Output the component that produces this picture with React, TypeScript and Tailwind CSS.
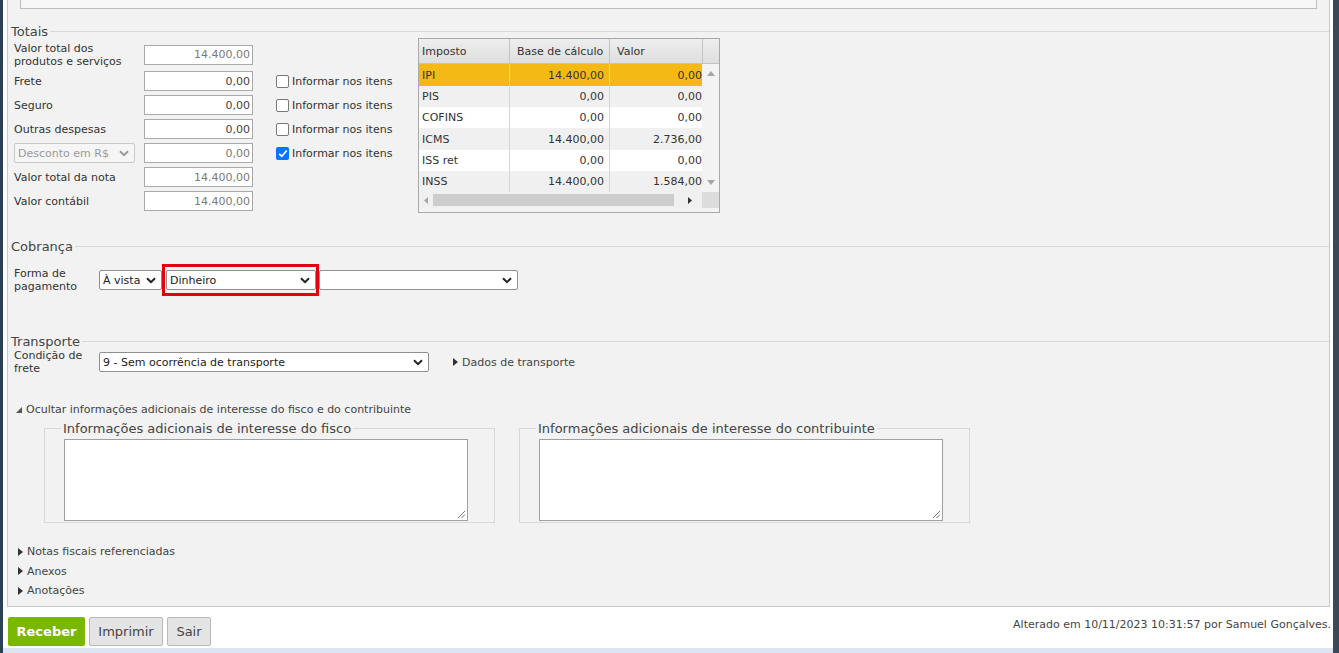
import type { ReactNode } from 'react';

const font = { fontFamily: '"DejaVu Sans", Verdana, sans-serif' };

function Chevron({ color = '#222' }: { color?: string }) {
  return (
    <svg width="10" height="7" viewBox="0 0 10 7" className="shrink-0">
      <path d="M1 1.2 L5 5.2 L9 1.2" fill="none" stroke={color} strokeWidth="2" />
    </svg>
  );
}

function Select({ value, className = '', disabled = false }: { value: string; className?: string; disabled?: boolean }) {
  return (
    <div
      className={`flex h-[20px] items-center justify-between rounded-[2px] border pl-[3px] pr-[5px] ${
        disabled ? 'border-[#c9c9c9] bg-[#f5f5f5] text-[#9a9a9a]' : 'border-[#8f8f8f] bg-white text-[#222]'
      } ${className}`}
    >
      <span className="truncate">{value}</span>
      <Chevron color={disabled ? '#9a9a9a' : '#222'} />
    </div>
  );
}

function NumInput({ value, muted = false }: { value: string; muted?: boolean }) {
  return (
    <div
      className={`flex h-[20px] w-[109px] items-center justify-end border border-[#a9a9a9] bg-white pr-[2px] ${
        muted ? 'text-[#7a7a7a]' : 'text-[#444]'
      }`}
    >
      {value}
    </div>
  );
}

function Check({ checked = false }: { checked?: boolean }) {
  return checked ? (
    <span className="flex h-[13px] w-[13px] items-center justify-center rounded-[2px] bg-[#0075ff]">
      <svg width="10" height="9" viewBox="0 0 10 9">
        <path d="M1.2 4.8 L3.8 7.3 L8.8 1.5" fill="none" stroke="white" strokeWidth="1.8" />
      </svg>
    </span>
  ) : (
    <span className="h-[13px] w-[13px] rounded-[2px] border border-[#767676] bg-white" />
  );
}

function SectionTitle({ children }: { children: ReactNode }) {
  return (
    <div className="flex h-[16px] items-center pl-[3px] text-[13px] text-[#444]">
      <span className="pr-[2px]">{children}</span>
      <div className="flex-1 border-t border-[#d9d9d9]" />
    </div>
  );
}

function TriRight() {
  return (
    <svg width="5" height="8" viewBox="0 0 5 8" className="mr-[4px] shrink-0">
      <path d="M0 0 L5 4 L0 8 Z" fill="#333" />
    </svg>
  );
}

function Toggle({ label }: { label: string }) {
  return (
    <div className="flex h-[19.5px] items-center pl-[10px] text-[#444]">
      <TriRight />
      {label}
    </div>
  );
}

function Grip() {
  return (
    <svg width="9" height="9" viewBox="0 0 9 9" className="absolute bottom-[1px] right-[1px]">
      <path d="M8 1 L1 8 M8 4.5 L4.5 8" stroke="#777" strokeWidth="1" />
    </svg>
  );
}

function InfoBox({ title }: { title: string }) {
  return (
    <div className="relative h-[95px] w-[451px] border border-[#d8d8d8]">
      <div className="absolute left-[16px] top-[-8px] bg-[#f1f2f1] px-[2px] text-[13px] leading-[15px] text-[#444]">{title}</div>
      <div className="relative ml-[19px] mt-[10px] h-[82px] w-[404px] border border-[#a0a0a0] bg-white">
        <Grip />
      </div>
    </div>
  );
}

const taxRows = [
  { name: 'IPI', base: '14.400,00', valor: '0,00', bg: 'bg-[#f4b914]', h: 'h-[22px]' },
  { name: 'PIS', base: '0,00', valor: '0,00', bg: 'bg-[#f0f0f0]', h: 'h-[21px]' },
  { name: 'COFINS', base: '0,00', valor: '0,00', bg: 'bg-white', h: 'h-[21px]' },
  { name: 'ICMS', base: '14.400,00', valor: '2.736,00', bg: 'bg-[#f0f0f0]', h: 'h-[22px]' },
  { name: 'ISS ret', base: '0,00', valor: '0,00', bg: 'bg-white', h: 'h-[21px]' },
  { name: 'INSS', base: '14.400,00', valor: '1.584,00', bg: 'bg-[#f0f0f0]', h: 'h-[21px]' },
];

function TaxTable() {
  return (
    <div className="mt-[-2px] w-[302px] border border-[#a9a9a9] bg-[#f3f3f3] text-[#333]">
      <div className="flex h-[25px] border-b border-[#c4c4c4] bg-gradient-to-b from-[#eeeeee] to-[#dedede]">
        <div className="flex w-[91px] items-center border-r border-[#c4c4c4] pl-[3px]">Imposto</div>
        <div className="flex w-[100px] items-center border-r border-[#c4c4c4] pl-[7px]">Base de cálculo</div>
        <div className="flex w-[93px] items-center border-r border-[#c4c4c4] pl-[7px]">Valor</div>
        <div className="flex-1" />
      </div>
      <div className="flex">
        <div className="w-[283px] overflow-hidden">
          {taxRows.map((r) => (
            <div key={r.name} className={`flex ${r.h} ${r.bg}`}>
              <div className="flex w-[91px] items-center border-r border-[#d6d6d6] pl-[3px]">{r.name}</div>
              <div className="flex w-[100px] items-center justify-end border-r border-[#d6d6d6] pr-[5px]">{r.base}</div>
              <div className="flex w-[92px] items-center justify-end whitespace-nowrap pr-0">{r.valor}</div>
            </div>
          ))}
        </div>
        <div className="flex w-[17px] flex-col items-center justify-between bg-[#f3f3f3] py-[7px]">
          <svg width="8" height="5" viewBox="0 0 8 5">
            <path d="M0 5 L4 0 L8 5 Z" fill="#a6a6a6" />
          </svg>
          <svg width="8" height="5" viewBox="0 0 8 5">
            <path d="M0 0 L4 5 L8 0 Z" fill="#a6a6a6" />
          </svg>
        </div>
      </div>
      <div className="flex h-[16px] items-center">
        <div className="flex h-full w-[283px] items-center bg-[#f0f0f0] pl-[5px]">
          <svg width="4" height="7" viewBox="0 0 4 7">
            <path d="M4 0 L0 3.5 L4 7 Z" fill="#a6a6a6" />
          </svg>
          <div className="ml-[5px] h-[12px] w-[241px] bg-[#cdcdcd]" />
          <svg width="4" height="7" viewBox="0 0 4 7" className="ml-[14px]">
            <path d="M0 0 L4 3.5 L0 7 Z" fill="#333" />
          </svg>
        </div>
        <div className="h-full flex-1 bg-[#dcdcdc]" />
      </div>
    </div>
  );
}

const totRows = [
  { label: 'Frete', value: '0,00', check: true, checked: false },
  { label: 'Seguro', value: '0,00', check: true, checked: false },
  { label: 'Outras despesas', value: '0,00', check: true, checked: false },
  { label: '', value: '0,00', check: true, checked: true, select: true },
  { label: 'Valor total da nota', value: '14.400,00', check: false, checked: false },
  { label: 'Valor contábil', value: '14.400,00', check: false, checked: false },
];

export default function App() {
  return (
    <div className="flex h-[653px] w-[1339px] overflow-hidden bg-white text-[11px] leading-[13px]" style={font}>
      <div className="w-[3px] shrink-0 bg-[#2c4056]" />
      <div className="flex flex-1 flex-col">
        <div className="ml-[4px] mr-[3px] h-[607px] border-x border-b border-[#c8c8c8] bg-[#f1f2f1]">
          <div className="mx-[12px] h-[9px] border-x border-b border-[#bdbdbd] bg-[#f6f7f6]" />

          {/* Totais */}
          <div className="mt-[14px]">
            <SectionTitle>Totais</SectionTitle>
          </div>
          <div className="mt-[1px] flex pl-[6px] text-[#333]">
            <div className="w-[404px]">
              <div className="flex h-[29px] items-center">
                <div className="w-[130px]">
                  Valor total dos
                  <br />
                  produtos e serviços
                </div>
                <NumInput value="14.400,00" muted />
              </div>
              {totRows.map((r, i) => (
                <div key={i} className="flex h-[24px] items-center">
                  {r.select ? (
                    <div className="w-[130px]">
                      <Select value="Desconto em R$" disabled className="w-[121px]" />
                    </div>
                  ) : (
                    <div className="w-[130px]">{r.label}</div>
                  )}
                  <NumInput value={r.value} muted={r.value !== '0,00' || !!r.select} />
                  {r.check ? (
                    <div className="ml-[23px] flex items-center gap-[3px]">
                      <Check checked={r.checked} />
                      <span>Informar nos itens</span>
                    </div>
                  ) : null}
                </div>
              ))}
            </div>
            <TaxTable />
          </div>

          {/* Cobrança */}
          <div className="mt-[25px]">
            <SectionTitle>Cobrança</SectionTitle>
          </div>
          <div className="mt-[10px] flex h-[32px] items-center pl-[6px] text-[#333]">
            <div className="w-[85px]">
              Forma de
              <br />
              pagamento
            </div>
            <Select value="À vista" className="w-[63px]" />
            <div className="flex h-[32px] w-[157px] items-center border-[3px] border-[#e3000f] pl-px">
              <Select value="Dinheiro" className="h-[19px] w-[150px]" />
            </div>
            <Select value="" className="w-[199px]" />
          </div>

          {/* Transporte */}
          <div className="mt-[37px]">
            <SectionTitle>Transporte</SectionTitle>
          </div>
          <div className="mt-[3px] flex h-[20px] items-center pl-[6px] text-[#333]">
            <div className="w-[85px]">
              Condição de
              <br />
              frete
            </div>
            <Select value="9 - Sem ocorrência de transporte" className="w-[330px]" />
            <div className="ml-[24px] flex items-center text-[#444]">
              <TriRight />
              Dados de transporte
            </div>
          </div>

          <div className="mt-[30px] flex h-[15px] items-center pl-[8px] text-[#444]">
            <svg width="6" height="6" viewBox="0 0 6 6" className="mr-[4px]">
              <path d="M6 0 L6 6 L0 6 Z" fill="#555" />
            </svg>
            Ocultar informações adicionais de interesse do fisco e do contribuinte
          </div>

          <div className="mt-[11px] flex gap-[24px] pl-[36px]">
            <InfoBox title="Informações adicionais de interesse do fisco" />
            <InfoBox title="Informações adicionais de interesse do contribuinte" />
          </div>

          <div className="mt-[19px]">
            <Toggle label="Notas fiscais referenciadas" />
            <Toggle label="Anexos" />
            <Toggle label="Anotações" />
          </div>
        </div>

        <div className="flex h-[41px] items-start justify-between pl-[5px] pr-[2px] pt-[10px]">
          <div className="flex gap-[4px]">
            <button className="h-[29px] w-[77px] rounded-[2px] bg-[#7ab800] text-[13px] font-bold text-white">Receber</button>
            <button className="h-[29px] w-[74px] rounded-[2px] border border-[#b9b9b9] bg-[#e4e4e4] text-[13px] text-[#444]">
              Imprimir
            </button>
            <button className="h-[29px] w-[44px] rounded-[2px] border border-[#b9b9b9] bg-[#e4e4e4] text-[13px] text-[#444]">
              Sair
            </button>
          </div>
          <div className="pt-[1px] text-[#444]">Alterado em 10/11/2023 10:31:57 por Samuel Gonçalves.</div>
        </div>
        <div className="h-[5px] bg-[#dce6f2]" />
      </div>
      <div className="w-[6px] shrink-0 bg-[#3a4858]" />
    </div>
  );
}
